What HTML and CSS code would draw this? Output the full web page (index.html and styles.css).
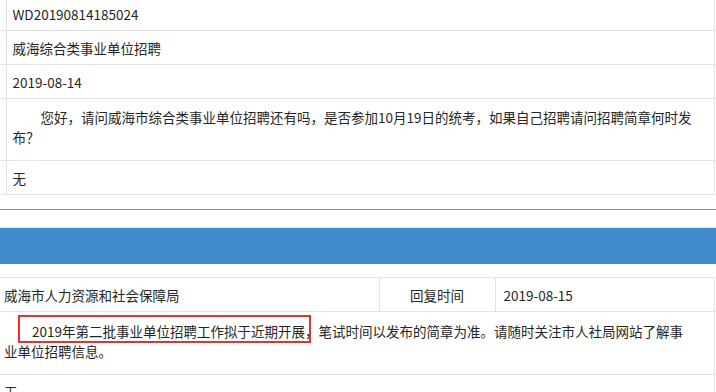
FILE: index.html
```html
<!DOCTYPE html>
<html lang="zh-CN">
    <head>
        <meta charset="UTF-8">
        <meta name="viewport" content="width=device-width, initial-scale=1.0">
        <title>网上咨询</title>
        <link rel="stylesheet" href="styles.css">
    </head>
    <body>
        <div class="page">
            <!-- 咨询信息 -->
            <div class="panel">
                <table class="detail">
                    <colgroup>
                        <col class="label-col">
                        <col>
                    </colgroup>
                    <tr>
                        <td></td>
                        <td>WD20190814185024</td>
                    </tr>
                    <tr>
                        <td></td>
                        <td>威海综合类事业单位招聘</td>
                    </tr>
                    <tr>
                        <td></td>
                        <td>2019-08-14</td>
                    </tr>
                    <tr>
                        <td></td>
                        <td class="content"><p>您好，请问威海市综合类事业单位招聘还有吗，是否参加10月19日的统考，如果自己招聘请问招聘简章何时发布？</p></td>
                    </tr>
                    <tr>
                        <td></td>
                        <td>无</td>
                    </tr>
                </table>
            </div>
            <div class="divider"></div>

            <!-- 回复信息 -->
            <div class="panel-heading"></div>
            <table class="reply">
                <colgroup>
                    <col class="dept-col">
                    <col class="time-label-col">
                    <col>
                </colgroup>
                <tr>
                    <td class="dept">威海市人力资源和社会保障局</td>
                    <td class="time-label">回复时间</td>
                    <td class="time">2019-08-15</td>
                </tr>
                <tr>
                    <td colspan="3" class="content"><p><span class="mark">2019年第二批事业单位招聘工作拟于近期开展</span>，笔试时间以发布的简章为准。请随时关注市人社局网站了解事业单位招聘信息。</p></td>
                </tr>
                <tr>
                    <td colspan="3" class="dept">无</td>
                </tr>
            </table>
        </div>
    </body>
</html>
```

FILE: styles.css
```css
html, body {
    margin: 0;
    padding: 0;
    background: #ffffff;
    overflow: hidden;
}
body {
    font-family: "Microsoft YaHei", "Noto Sans CJK SC", sans-serif;
    font-size: 13.5px;
    line-height: 20px;
    color: #262626;
}
.page {
    margin-top: -3px;
}
table {
    border-collapse: collapse;
    table-layout: fixed;
}
td {
    border: 1px solid #e3e3e3;
    padding: 7px 6px 6px;
    vertical-align: top;
}
p {
    margin: 0;
    text-indent: 28px;
}

/* 上半部分：咨询内容 */
.panel {
    padding-bottom: 14px;
}
.divider {
    height: 1px;
    background-color: #5b9bd5;
}
.detail {
    width: 715px;
}
.detail td:first-child {
    border-left: none;
    padding: 0;
}
.detail tr:first-child td {
    border-top: none;
}
.label-col {
    width: 6px;
}
.detail .content {
    padding: 8px 6px 13px;
}

/* 蓝色标题栏 */
.panel-heading {
    margin-top: 17px;
    height: 36px;
    border-top: 1px solid #dfe5ea;
    background-color: #428bca;
    margin-bottom: 13px;
}

/* 下半部分：回复内容 */
.reply {
    width: 715px;
}
.reply td:first-child {
    border-left: none;
}
.dept-col {
    width: 379px;
}
.time-label-col {
    width: 116px;
}
.reply .dept {
    padding-left: 4px;
}
.reply .time-label {
    text-align: center;
}
.reply .time {
    padding-left: 8px;
}
.reply .content {
    padding: 9px 20px 13px 4px;
}

/* 红框标注 */
.mark {
    position: relative;
}
.mark::before {
    content: "";
    position: absolute;
    left: -14px;
    right: -6px;
    top: -6px;
    bottom: -2px;
    border: 2px solid #e8312f;
}
```
